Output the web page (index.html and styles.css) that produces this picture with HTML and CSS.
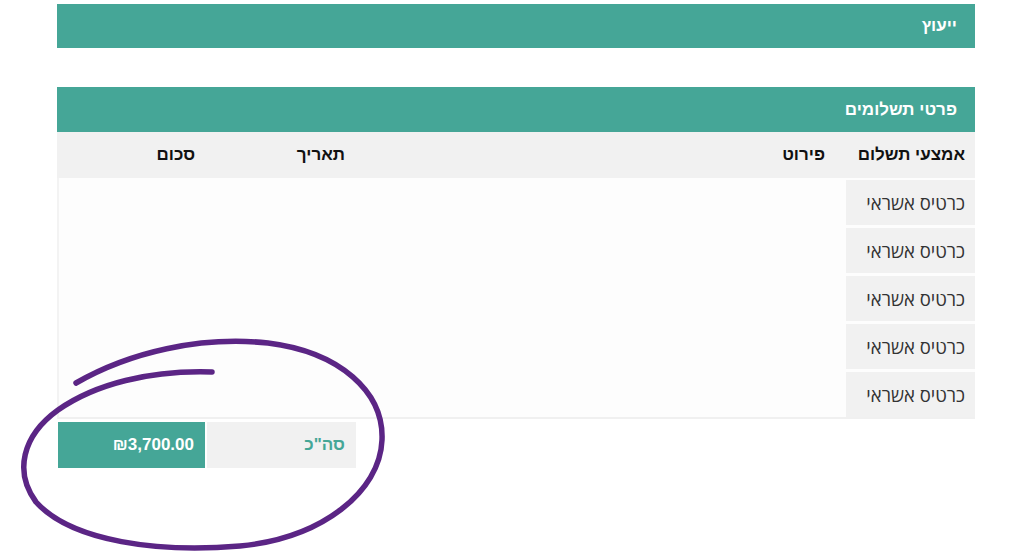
FILE: index.html
```html
<!DOCTYPE html>
<html lang="he" dir="rtl">
<head>
    <meta charset="UTF-8">
    <meta name="viewport" content="width=device-width, initial-scale=1.0">
    <title>פרטי תשלומים</title>
    <link rel="stylesheet" href="styles.css">
</head>
<body>
    <main class="page">
        <section class="panel">
            <h2 class="panel-title">ייעוץ</h2>
        </section>

        <section class="panel payments">
            <h2 class="panel-title">פרטי תשלומים</h2>
            <div class="pay-table">
                <div class="pay-row pay-head">
                    <div class="cell c1">אמצעי תשלום</div>
                    <div class="cell c2">פירוט</div>
                    <div class="cell c3">תאריך</div>
                    <div class="cell c4">סכום</div>
                </div>
                <div class="pay-body">
                    <div class="pay-row"><div class="cell c1 method">כרטיס אשראי</div></div>
                    <div class="pay-row"><div class="cell c1 method">כרטיס אשראי</div></div>
                    <div class="pay-row"><div class="cell c1 method">כרטיס אשראי</div></div>
                    <div class="pay-row"><div class="cell c1 method">כרטיס אשראי</div></div>
                    <div class="pay-row"><div class="cell c1 method">כרטיס אשראי</div></div>
                </div>
                <div class="pay-total">
                    <div class="total-label">סה"כ</div>
                    <div class="total-sum">₪3,700.00</div>
                </div>
            </div>
        </section>

        <!-- hand drawn circle around the total -->
        <svg class="scribble" width="1024" height="557" viewBox="0 0 1024 557">
            <path d="M212 372 C150 370 95 384 58 410 C22 436 14 472 36 502 C72 542 160 553 240 546 C322 538 380 492 382 440 C384 392 340 352 268 343 C200 336 130 352 76 383"
                  fill="none" stroke="#5b2585" stroke-width="5.5" stroke-linecap="round"/>
        </svg>
    </main>
</body>
</html>
```

FILE: styles.css
```css
* {
    box-sizing: border-box;
}

body {
    margin: 0;
    background: #fff;
    font-family: "Open Sans", "Liberation Sans", Arial, sans-serif;
    color: #222;
}

.page {
    position: relative;
    width: 1024px;
    height: 557px;
    padding: 4px 49px 0 0;
}

.panel {
    width: 918px;
}

.panel-title {
    margin: 0;
    height: 44px;
    line-height: 44px;
    padding-right: 18px;
    background-color: #45a697;
    color: #fff;
    font-family: "Liberation Sans", Arial, sans-serif;
    font-size: 17px;
    font-weight: bold;
}

.payments {
    margin-top: 39px;
}

.payments .panel-title {
    height: 45px;
    line-height: 45px;
}

.pay-row {
    display: grid;
    grid-template-columns: 129px 490px 150px 149px;
}

.pay-head {
    height: 46px;
    background: #f1f1f1;
    font-family: "Liberation Sans", Arial, sans-serif;
    font-weight: bold;
    font-size: 17px;
    color: #111;
}

.cell {
    display: flex;
    align-items: center;
    padding-right: 11px;
}

.pay-head .c1 {
    padding-right: 10px;
}

.pay-head .c2 {
    padding-right: 21px;
}

.pay-body {
    padding-top: 2px;
    background: #fdfdfd;
    border-left: 2px solid #f3f3f3;
    border-bottom: 2px solid #f0f0f0;
}

.pay-body .pay-row {
    height: 45px;
    margin-bottom: 3px;
}

.pay-body .pay-row:last-child {
    margin-bottom: 0;
}

.method {
    background: #f1f1f1;
    padding-right: 10px;
    font-size: 18.5px;
    color: #333;
}

.pay-total {
    display: flex;
    gap: 2px;
    margin-top: 3px;
    padding-right: 619px;
    height: 46px;
    font-family: "Liberation Sans", Arial, sans-serif;
    font-weight: bold;
    font-size: 17px;
}

.total-label {
    width: 149px;
    background: #f1f1f1;
    color: #45a697;
    padding-right: 11px;
    display: flex;
    align-items: center;
}

.total-sum {
    width: 147px;
    background: #45a697;
    color: #fff;
    padding-right: 11px;
    display: flex;
    align-items: center;
}

.scribble {
    position: absolute;
    top: 0;
    left: 0;
    pointer-events: none;
}
```
